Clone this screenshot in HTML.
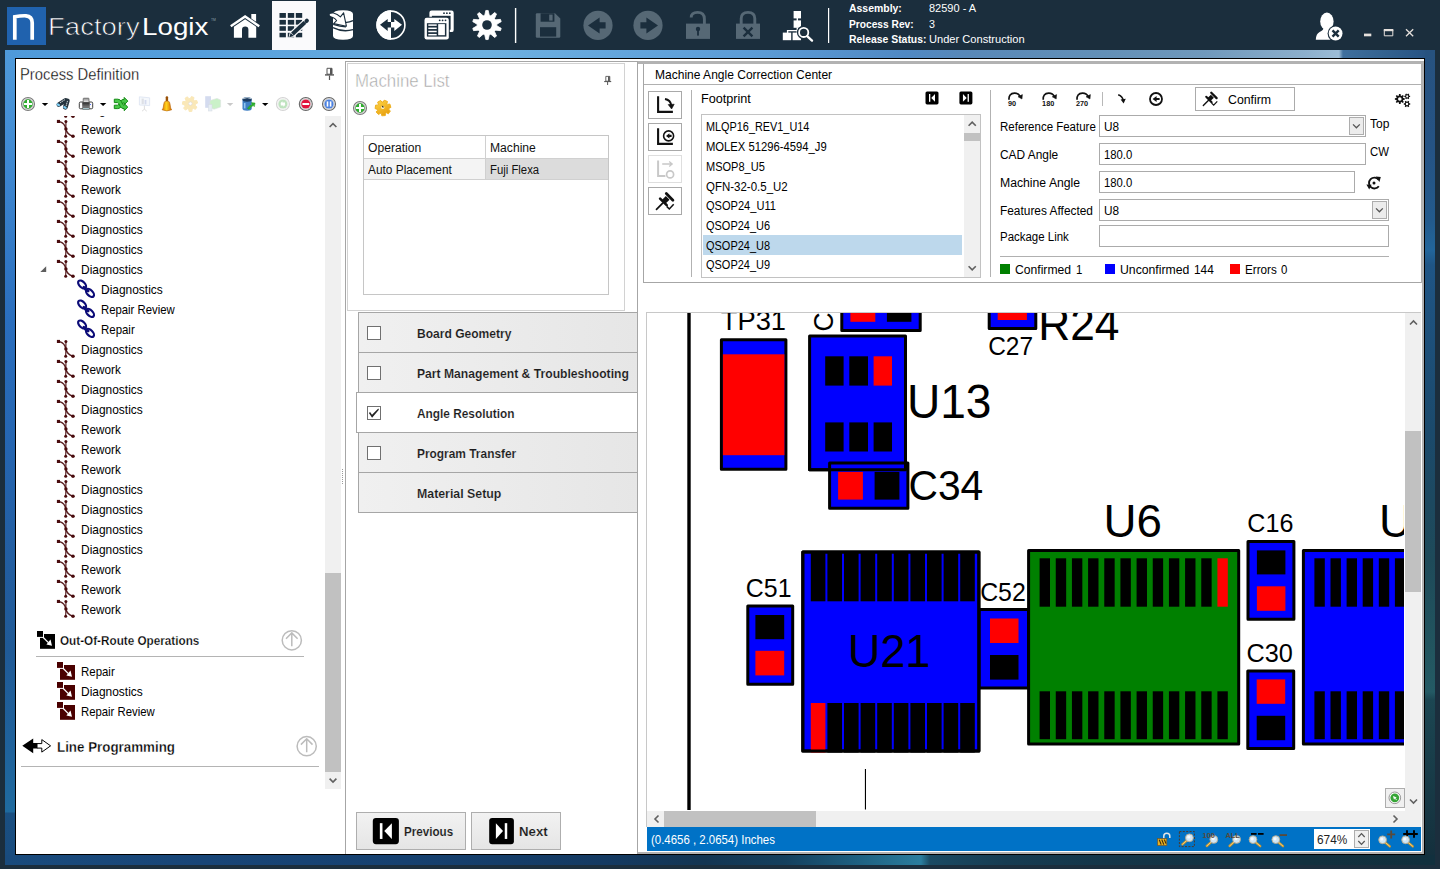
<!DOCTYPE html>
<html lang="en"><head><meta charset="utf-8"><title>FactoryLogix</title><style>
html,body{margin:0;padding:0;}
body{width:1440px;height:869px;overflow:hidden;background:#1b2e3d;position:relative;font-family:'Liberation Sans',sans-serif;}
div,span,svg,b{position:absolute;display:block;box-sizing:border-box;}
.t{white-space:pre;}
svg{overflow:visible;}
</style></head><body>
<div style="left:5px;top:50px;width:1430px;height:815px;background:#1d4f80;"></div>
<div style="left:5px;top:50px;width:1430px;height:9px;background:linear-gradient(90deg,#4f9ada 0px,#559fdc 200px,#62a8de 330px,#6eb1e0 480px,#63a5dc 620px,#5b9bd5 760px,#5089c4 900px,#5888b8 960px,#6390b7 1100px,#7099bc 1200px,#8cafcc 1300px,#9cbcd6 1333px,#9cbcd6 1334px,#3f6f9d 1338px,#33628f 1380px,#2a5787 1410px,#26507d 1430px);"></div>
<div style="left:5px;top:50px;width:11px;height:815px;background:linear-gradient(180deg,#4f9ada 0px,#4a95d8 40px,#3a82cc 150px,#2a6ebd 270px,#2565b0 400px,#225d9f 520px,#205a96 600px,#1f629b 700px,#1f6a9e 761px,#1f6a9e 762px,#1a4f81 763px,#194b7d 815px);"></div>
<div style="left:1425px;top:50px;width:10px;height:815px;background:linear-gradient(180deg,#27527f 0px,#255384 100px,#235a8c 170px,#22659a 200px,#1f5585 215px,#1d4f78 300px,#1b4a6c 380px,#1d4960 450px,#1e4a59 510px,#22555f 600px,#245a64 642px,#1c4652 650px,#193f4b 700px,#15323f 790px,#132e3c 815px);"></div>
<div style="left:5px;top:855px;width:1430px;height:10px;background:linear-gradient(90deg,#194b7d 0px,#184577 200px,#164170 400px,#143a62 600px,#133552 700px,#14405e 780px,#1d5f80 850px,#2a7d9e 915px,#2a7d9e 916px,#1a4a63 925px,#163c52 1000px,#143649 1100px,#12313f 1300px,#11303e 1430px);"></div>
<div style="left:15px;top:58px;width:1410px;height:797px;background:#fff;border:1px solid #000;box-sizing:border-box;"></div>
<div style="left:272px;top:1px;width:44px;height:49px;background:#fafafc;"></div>
<div style="left:7px;top:7px;width:39px;height:38px;background:#2062ae;"></div>
<svg style="left:0;top:0" width="1440" height="50" viewBox="0 0 1440 50"><path d="M14.8 39.7 V16.7 Q21 15.6 26 15.8 Q32.2 16.2 32.2 22.8 V39.7" fill="none" stroke="#ffffff" stroke-width="3.7" stroke-linejoin="miter"/><path d="M230.1 25.2 L245.1 15 L259.9 25.2 L258.6 27.3 L245.1 18 L231.4 27.3 Z" fill="#ffffff"/><path d="M251.3 13.9 H256.1 V21.7 L251.3 18.4 Z" fill="#ffffff"/><path d="M233.9 26.7 L245.1 19.3 L256.2 26.7 V37.8 H248.4 V29.8 Q248.4 26.5 245.2 26.5 Q242 26.5 242 29.8 V37.8 H233.9 Z" fill="#ffffff"/><rect x="279.5" y="13.0" width="6.4" height="4.85" fill="#1b2e3d"/><rect x="279.5" y="19.9" width="6.4" height="4.75" fill="#1b2e3d"/><rect x="279.5" y="26.2" width="6.4" height="4.6" fill="#1b2e3d"/><rect x="279.5" y="32.8" width="6.4" height="4.5" fill="#1b2e3d"/><rect x="287.8" y="13.0" width="6.4" height="4.85" fill="#1b2e3d"/><rect x="287.8" y="19.9" width="6.4" height="4.75" fill="#1b2e3d"/><rect x="287.8" y="26.2" width="6.4" height="4.6" fill="#1b2e3d"/><rect x="287.8" y="32.8" width="6.4" height="4.5" fill="#1b2e3d"/><rect x="295.8" y="13.0" width="6.4" height="4.85" fill="#1b2e3d"/><rect x="295.8" y="19.9" width="6.4" height="4.75" fill="#1b2e3d"/><rect x="295.8" y="26.2" width="6.4" height="4.6" fill="#1b2e3d"/><rect x="295.8" y="32.8" width="6.4" height="4.5" fill="#1b2e3d"/><path d="M292.4 34.1 L305.4 22" stroke="#fafafc" stroke-width="6.4" stroke-linecap="butt"/><path d="M306 21.4 L306.9 20.6" stroke="#fafafc" stroke-width="6.2" stroke-linecap="round"/><path d="M288.4 38 L290 31.4 L295.4 36.6 Z" fill="#fafafc"/><path d="M292.5 34 L304.9 22.4" stroke="#1b2e3d" stroke-width="4" stroke-linecap="butt"/><path d="M306.4 21.1 L306.9 20.6" stroke="#1b2e3d" stroke-width="4" stroke-linecap="round"/><path d="M289.3 37.2 L290.6 33 L293.8 36 Z" fill="#1b2e3d"/><path d="M333 14 Q333 10.2 343 10.2 Q353 10.2 353 14 V36 Q353 39.7 343 39.7 Q333 39.7 333 36 Z" fill="#ffffff"/><path d="M333 27.6 Q343 32.6 353 29.6" fill="none" stroke="#1b2e3d" stroke-width="1.3"/><path d="M345 22.6 Q350 22.2 353 20.6" fill="none" stroke="#1b2e3d" stroke-width="1.3"/><path d="M333.2 24.3 Q340 26.5 346 26.8" fill="none" stroke="#1b2e3d" stroke-width="1.3"/><path d="M329.2 13.6 Q331 12.6 333.5 13 Q337.5 14 340.4 16.8 L343.6 12.8 L346.4 26.2 L333.6 23.6 L336.6 20.6 Q335 18.4 332.8 17.6 Q330 16.8 329.2 15.6 Z" fill="#ffffff" stroke="#1b2e3d" stroke-width="1.1" stroke-linejoin="round"/><circle cx="391" cy="25" r="13.9" fill="#1b2e3d" stroke="#ffffff" stroke-width="1.6"/><path d="M391 10.3 A14.7 14.7 0 0 0 391 39.7 Z" fill="#ffffff"/><path d="M380 24.8 L387.7 18.9 V22 H391 V27.6 H387.7 V31 Z" fill="#1b2e3d"/><path d="M402 24.8 L394.3 18.9 V22 H391 V27.6 H394.3 V31 Z" fill="#ffffff"/><rect x="429.4" y="10.6" width="24.3" height="21.5" rx="2.2" fill="#ffffff"/><rect x="431.9" y="15.8" width="18.7" height="13.9" fill="#1b2e3d"/><circle cx="444" cy="13.2" r="0.9" fill="#1b2e3d"/><circle cx="446.9" cy="13.2" r="0.9" fill="#1b2e3d"/><circle cx="449.8" cy="13.2" r="0.9" fill="#1b2e3d"/><rect x="423.5" y="16.8" width="26.3" height="23.6" rx="3" fill="#1b2e3d"/><rect x="424.5" y="17.8" width="24.3" height="21.6" rx="2.2" fill="#ffffff"/><rect x="426.9" y="23.2" width="19.5" height="13.4" fill="#1b2e3d"/><circle cx="439.7" cy="20.3" r="0.9" fill="#1b2e3d"/><circle cx="442.6" cy="20.3" r="0.9" fill="#1b2e3d"/><circle cx="445.5" cy="20.3" r="0.9" fill="#1b2e3d"/><rect x="438.2" y="24.1" width="6.7" height="11.1" fill="#ffffff"/><rect x="428.3" y="24.35" width="8.4" height="1.5" fill="#ffffff"/><rect x="428.3" y="27.55" width="8.4" height="1.5" fill="#ffffff"/><rect x="428.3" y="30.75" width="8.4" height="1.5" fill="#ffffff"/><rect x="428.3" y="33.95" width="8.4" height="1.5" fill="#ffffff"/><path d="M485.81 10.45 L488.19 10.45 L489.28 15.37 L490.82 15.87 L494.59 12.53 L496.52 13.93 L494.51 18.55 L495.46 19.85 L500.47 19.37 L501.21 21.64 L496.87 24.19 L496.87 25.81 L501.21 28.36 L500.47 30.63 L495.46 30.15 L494.51 31.45 L496.52 36.07 L494.59 37.47 L490.82 34.13 L489.28 34.63 L488.19 39.55 L485.81 39.55 L484.72 34.63 L483.18 34.13 L479.41 37.47 L477.48 36.07 L479.49 31.45 L478.54 30.15 L473.53 30.63 L472.79 28.36 L477.13 25.81 L477.13 24.19 L472.79 21.64 L473.53 19.37 L478.54 19.85 L479.49 18.55 L477.48 13.93 L479.41 12.53 L483.18 15.87 L484.72 15.37 Z" fill="#ffffff" stroke="#ffffff" stroke-width="0.8" stroke-linejoin="round"/><circle cx="487" cy="25" r="4.8" fill="#1b2e3d"/><rect x="514.9" y="8" width="1.4" height="35" fill="#ffffff"/><rect x="828" y="8" width="1.2" height="35" fill="#ffffff"/><path d="M537 13.3 H555 L560.3 18.6 V36.6 Q560.3 37.8 559.1 37.8 H537 Q535.8 37.8 535.8 36.6 V14.5 Q535.8 13.3 537 13.3 Z" fill="#566875"/><rect x="540.6" y="13.3" width="13.8" height="8.4" fill="#1b2e3d"/><rect x="549.2" y="14.6" width="3.4" height="6" fill="#566875"/><rect x="540" y="27.2" width="16.2" height="9.4" fill="#1b2e3d"/><circle cx="598" cy="25.4" r="14.6" fill="#566875"/><path d="M588 25.4 L599.6 17.4 V22.3 H605.6 V28.5 H599.6 V33.4 Z" fill="#1b2e3d"/><circle cx="648" cy="25.4" r="14.6" fill="#566875"/><path d="M658 25.4 L646.4 17.4 V22.3 H640.4 V28.5 H646.4 V33.4 Z" fill="#1b2e3d"/><path d="M691.2 17.6 Q691.2 12.4 697.5 12.4 Q704.4 12.4 704.4 19 V24" fill="none" stroke="#566875" stroke-width="2.9"/><rect x="686" y="23.6" width="24" height="15.3" fill="#566875"/><circle cx="698" cy="29" r="2.2" fill="#1b2e3d"/><rect x="697.1" y="29" width="1.8" height="6.6" fill="#1b2e3d"/><path d="M741.2 24 V18.6 Q741.2 12.4 748 12.4 Q754.8 12.4 754.8 18.6 V24" fill="none" stroke="#566875" stroke-width="2.9"/><rect x="736" y="23.6" width="24" height="15.3" fill="#566875"/><path d="M743.6 27.6 L752.4 36.4 M752.4 27.6 L743.6 36.4" stroke="#1b2e3d" stroke-width="2.4"/><rect x="793.6" y="11" width="7.4" height="7.4" fill="#ffffff"/><rect x="793.6" y="20.4" width="7.4" height="7.4" fill="#ffffff"/><rect x="796.6" y="18" width="1.4" height="3" fill="#ffffff"/><path d="M797.3 27.6 V30.6 H787.6 V33 M797.3 30.6 V33" fill="none" stroke="#ffffff" stroke-width="1.4"/><rect x="782.8" y="32.6" width="8.4" height="7.6" fill="#ffffff"/><rect x="792.6" y="32.6" width="8.4" height="7.6" fill="#ffffff"/><circle cx="803.7" cy="32.4" r="5.1" fill="#1b2e3d" stroke="#1b2e3d" stroke-width="3.4"/><circle cx="803.7" cy="32.4" r="4.6" fill="#1b2e3d" stroke="#ffffff" stroke-width="1.8"/><path d="M807.4 36.4 L812 40.6" stroke="#ffffff" stroke-width="2.4" stroke-linecap="round"/><ellipse cx="1326.9" cy="21.4" rx="6.7" ry="8.8" fill="#ffffff"/><path d="M1315.8 39.8 Q1316 33.8 1319.6 32 Q1323.6 30.4 1324 27 H1329.8 Q1330 30.4 1334 32 Q1337.8 33.8 1338 39.8 Z" fill="#ffffff"/><circle cx="1335.6" cy="33.5" r="8" fill="#1b2e3d"/><circle cx="1335.6" cy="33.5" r="6.9" fill="#ffffff"/><path d="M1332.5 30.4 L1338.7 36.6 M1338.7 30.4 L1332.5 36.6" stroke="#1b2e3d" stroke-width="2.4"/><rect x="1364" y="33.6" width="7.3" height="2.7" fill="#e6e0dc"/><path d="M1384.3 29.9 H1392.8 V35.8 H1384.3 Z" fill="none" stroke="#e6e0dc" stroke-width="1"/><rect x="1383.8" y="29" width="9.5" height="2.2" fill="#e6e0dc"/><path d="M1406 29.2 L1413.2 36.2 M1413.2 29.2 L1406 36.2" stroke="#e6e0dc" stroke-width="1.3"/></svg>
<span class="t" style="left:48.20px;top:16.58px;font-size:24.6px;line-height:20px;color:#fff;transform:scaleX(1.1196);transform-origin:0 0;-webkit-text-stroke:0.7px #1b2e3d;">Factory</span>
<span class="t" style="left:141.58px;top:16.58px;font-size:24.6px;line-height:20px;color:#fff;transform:scaleX(1.1297);transform-origin:0 0;">Logix</span>
<span class="t" style="left:211.00px;top:10.25px;font-size:3.6px;line-height:20px;color:#8fa0ad;transform:scaleX(0.9300);transform-origin:0 0;">TM</span>
<span class="t" style="left:849.10px;top:-2.08px;font-size:11.5px;line-height:20px;color:#fff;font-weight:700;transform:scaleX(0.9084);transform-origin:0 0;">Assembly:</span>
<span class="t" style="left:848.59px;top:13.82px;font-size:11.5px;line-height:20px;color:#fff;font-weight:700;transform:scaleX(0.8869);transform-origin:0 0;">Process Rev:</span>
<span class="t" style="left:848.57px;top:29.02px;font-size:11.5px;line-height:20px;color:#fff;font-weight:700;transform:scaleX(0.9044);transform-origin:0 0;">Release Status:</span>
<span class="t" style="left:928.96px;top:-2.08px;font-size:11.5px;line-height:20px;color:#fff;transform:scaleX(0.9575);transform-origin:0 0;">82590 - A</span>
<span class="t" style="left:928.97px;top:13.82px;font-size:11.5px;line-height:20px;color:#fff;transform:scaleX(0.9300);transform-origin:0 0;">3</span>
<span class="t" style="left:928.55px;top:29.02px;font-size:11.5px;line-height:20px;color:#fff;transform:scaleX(0.9650);transform-origin:0 0;">Under Construction</span>
<span class="t" style="left:19.62px;top:64.59px;font-size:15.6px;line-height:20px;color:#000;transform:scaleX(0.9487);transform-origin:0 0;-webkit-text-stroke:0.3px #fff;">Process Definition</span>
<svg style="left:0;top:0" width="345" height="116" viewBox="0 0 345 116"><g transform="translate(325 68)"><path d="M2 0.3 H7 V6.2 H2 Z" fill="#fff" stroke="#555" stroke-width="1"/><rect x="5" y="0.3" width="2" height="6" fill="#555"/><rect x="0" y="6.2" width="9" height="1.4" fill="#555"/><rect x="3.9" y="7.6" width="1.2" height="4.4" fill="#555"/></g><circle cx="28" cy="104" r="6.5" fill="#fff" stroke="#7a7a7a" stroke-width="1.1"/><circle cx="28" cy="104" r="5.3" fill="none" stroke="#a8a8a8" stroke-width="0.7"/><circle cx="28" cy="104" r="4.4" fill="#2fb02f" stroke="#1f8f1f" stroke-width="0.6"/><path d="M23.9 104 H32.1 M28 99.9 V108.1" stroke="#fff" stroke-width="2"/><path d="M41.8 102.9 h6.4 l-3.2 3.2 Z" fill="#000"/><g stroke-linecap="round"><path d="M65.4 100.5 L58.8 104.6" stroke="#26343e" stroke-width="4.6"/><path d="M67.2 100.9 L65.4 107.2" stroke="#26343e" stroke-width="4.9"/><path d="M64.6 99.9 L60.4 102.5" stroke="#dfe6ea" stroke-width="0.9" stroke-dasharray="0.8 1.3"/><path d="M67.4 101.3 L66.2 105.7" stroke="#dfe6ea" stroke-width="0.9" stroke-dasharray="0.8 1.3"/><ellipse cx="58.3" cy="104.8" rx="1.9" ry="1.2" transform="rotate(35 58.3 104.8)" fill="#7fd0f8"/><ellipse cx="65" cy="107.5" rx="1.9" ry="1.2" transform="rotate(25 65 107.5)" fill="#7fd0f8"/></g><defs><linearGradient id="prg" x1="0" y1="0" x2="0" y2="1"><stop offset="0" stop-color="#2c2c2c"/><stop offset="1" stop-color="#8a8a8a"/></linearGradient><linearGradient id="prt" x1="0" y1="0" x2="0" y2="1"><stop offset="0" stop-color="#8e8e8e"/><stop offset="1" stop-color="#f4f4f4"/></linearGradient></defs><rect x="79.3" y="102" width="13.4" height="6.8" rx="1.3" fill="#fbfbfb" stroke="#2a2a2a" stroke-width="0.9"/><rect x="83.2" y="98.2" width="5.8" height="4.4" rx="0.6" fill="url(#prt)" stroke="#555" stroke-width="0.7"/><rect x="82.2" y="102.4" width="7.6" height="5.6" fill="url(#prg)"/><rect x="82.8" y="108" width="6.4" height="1.5" fill="#c4eef4" stroke="#444" stroke-width="0.5"/><rect x="90.1" y="104" width="0.9" height="0.9" fill="#3355ff"/><path d="M99.9 102.9 h6.4 l-3.2 3.2 Z" fill="#000"/><g transform="translate(113.8 97.4)" fill="#48c848" stroke="#128a12" stroke-width="1" stroke-linejoin="round"><path d="M0.5 11.2 H4 Q6.4 11.2 7.6 8.8 L9 6.2 Q9.6 5.4 10.4 5.4 V7.4 L14 3.7 L10.4 0 V1.9 Q7.6 1.9 6.4 4.2 L5 6.8 Q4.4 7.8 3.6 7.8 H0.5 Z"/><path d="M0.5 1.8 H4 Q6.4 1.8 7.6 4.2 L9 7 Q9.6 7.8 10.4 7.8 V6.1 L14 9.7 L10.4 13.3 V11.3 Q7.6 11.3 6.4 9 L5 6.2 Q4.4 5.2 3.6 5.2 H0.5 Z"/></g><g transform="translate(139 96)" opacity="0.55"><path d="M0.4 0.8 L10.6 1.8 V9.6 L0.4 9 Z" fill="#eef3fb" stroke="#b9c8e4" stroke-width="0.7"/><rect x="2.6" y="2.6" width="2.2" height="5.6" fill="#c4c8d2"/><rect x="5.6" y="4" width="1.8" height="4.4" fill="#b4bfe0"/><path d="M5.4 9.6 V13.4 M5.4 13.2 L3 15.2 M5.4 13.2 L7.8 15.2" stroke="#bbb" stroke-width="0.9" fill="none"/></g><defs><linearGradient id="bellg" x1="0" x2="1"><stop offset="0" stop-color="#e07a00"/><stop offset="0.45" stop-color="#ffd21e"/><stop offset="1" stop-color="#d86c00"/></linearGradient></defs><g transform="translate(161.8 96)"><rect x="3.9" y="0.2" width="2.4" height="5.2" rx="1.1" fill="#9a5208"/><path d="M3.4 5.2 Q2.4 5.6 2 8 L1.5 11.2 Q1.1 13 0.3 13.8 Q5.1 16 9.9 13.8 Q9.1 13 8.7 11.2 L8.2 8 Q7.8 5.6 6.8 5.2 Z" fill="url(#bellg)" stroke="#b45e00" stroke-width="0.6"/></g><path d="M196.74 100.49 L197.54 103.09 L195.40 104.12 L195.20 105.46 L196.95 107.09 L195.42 109.33 L193.27 108.30 L192.10 108.98 L191.92 111.35 L189.21 111.56 L188.68 109.24 L187.42 108.74 L185.45 110.08 L183.60 108.10 L185.08 106.23 L184.68 104.94 L182.40 104.23 L182.81 101.55 L185.19 101.55 L185.95 100.43 L185.08 98.21 L187.43 96.85 L188.92 98.71 L190.27 98.61 L191.46 96.54 L193.99 97.53 L193.46 99.86 L194.39 100.85 Z" fill="#fae8b8" stroke="#fae8b8" stroke-width="1" stroke-linejoin="round"/><circle cx="190.4" cy="103.6" r="1.7" fill="#fff" stroke="#d6d6de" stroke-width="0.6"/><g transform="translate(205 96)" opacity="0.6"><rect x="0.2" y="0.2" width="5.8" height="11.6" fill="#b9c4e6"/><path d="M5 4.6 L12 2.4 L15.6 4 V11 L9 13.2 L5 11.6 Z" fill="#a8e8a4" stroke="#c8d0d0" stroke-width="0.6"/><rect x="3.4" y="8.6" width="3.6" height="6.4" fill="#d6e2ee" stroke="#b8c4d0" stroke-width="0.5"/></g><path d="M226.9 102.9 h6.4 l-3.2 3.2 Z" fill="#c9c9c9"/><g transform="translate(241.7 97)"><path d="M0.8 2.4 Q0.8 0.2 5.4 0.2 Q10 0.2 10 2.4 V11.6 Q10 13.8 5.4 13.8 Q0.8 13.8 0.8 11.6 Z" fill="#3f7fc4"/><ellipse cx="5.4" cy="2.6" rx="4.6" ry="2.2" fill="#1c3c62"/><path d="M1 1.8 Q5.4 -0.6 9.8 1.8" stroke="#b8c4cc" stroke-width="1" fill="none"/><path d="M3 6 V11.4" stroke="#8fc4ee" stroke-width="1.6"/><path d="M5.6 11.4 Q8 8 10.4 7.4 L9.6 5.6 L13.4 6 L12.6 9.8 L11.6 8.6 Q9.4 9.6 7.4 12.4 Z" fill="#2fb52f" stroke="#1e8e1e" stroke-width="0.4"/></g><path d="M262 102.9 h6.4 l-3.2 3.2 Z" fill="#000"/><circle cx="282.9" cy="104" r="6.5" fill="#fff" stroke="#d4d4d4" stroke-width="1.1"/><circle cx="282.9" cy="104" r="5.3" fill="none" stroke="#e6e6e6" stroke-width="0.7"/><circle cx="282.9" cy="104" r="4.6" fill="#bfe3bf"/><path d="M280.4 103.2 L282.4 101.2 V102.4 H285 V103.9 H282.4 V105.2 Z M285.4 104.8 L283.4 106.8 V105.6 H280.8 V104.1 H283.4 V102.8 Z" fill="#fff"/><circle cx="305.8" cy="104" r="6.5" fill="#fff" stroke="#666" stroke-width="1.1"/><circle cx="305.8" cy="104" r="5.3" fill="none" stroke="#aaa" stroke-width="0.7"/><circle cx="305.8" cy="104" r="4.6" fill="#e0143c"/><rect x="302.4" y="103" width="6.8" height="2" fill="#fff"/><circle cx="329" cy="104" r="6.5" fill="#fff" stroke="#666" stroke-width="1.1"/><circle cx="329" cy="104" r="5.3" fill="none" stroke="#aaa" stroke-width="0.7"/><circle cx="329" cy="104" r="4.6" fill="#4a80e0"/><rect x="326.7" y="101.4" width="1.6" height="5.2" fill="#fff"/><rect x="329.8" y="101.4" width="1.6" height="5.2" fill="#fff"/></svg>
<div style="left:16px;top:116px;width:309px;height:680px;overflow:hidden">
<div style="left:-16px;top:-116px;width:345px;height:869px">
<span class="t" style="left:80.62px;top:99.70px;font-size:12.7px;line-height:20px;color:#000;transform:scaleX(0.9418);transform-origin:0 0;">Diagnostics</span>
<span class="t" style="left:80.64px;top:119.70px;font-size:12.7px;line-height:20px;color:#000;transform:scaleX(0.9265);transform-origin:0 0;">Rework</span>
<span class="t" style="left:80.64px;top:139.70px;font-size:12.7px;line-height:20px;color:#000;transform:scaleX(0.9265);transform-origin:0 0;">Rework</span>
<span class="t" style="left:80.62px;top:159.70px;font-size:12.7px;line-height:20px;color:#000;transform:scaleX(0.9418);transform-origin:0 0;">Diagnostics</span>
<span class="t" style="left:80.64px;top:179.70px;font-size:12.7px;line-height:20px;color:#000;transform:scaleX(0.9265);transform-origin:0 0;">Rework</span>
<span class="t" style="left:80.62px;top:199.70px;font-size:12.7px;line-height:20px;color:#000;transform:scaleX(0.9418);transform-origin:0 0;">Diagnostics</span>
<span class="t" style="left:80.62px;top:219.70px;font-size:12.7px;line-height:20px;color:#000;transform:scaleX(0.9418);transform-origin:0 0;">Diagnostics</span>
<span class="t" style="left:80.62px;top:239.70px;font-size:12.7px;line-height:20px;color:#000;transform:scaleX(0.9418);transform-origin:0 0;">Diagnostics</span>
<span class="t" style="left:80.62px;top:259.70px;font-size:12.7px;line-height:20px;color:#000;transform:scaleX(0.9418);transform-origin:0 0;">Diagnostics</span>
<span class="t" style="left:100.82px;top:279.70px;font-size:12.7px;line-height:20px;color:#000;transform:scaleX(0.9418);transform-origin:0 0;">Diagnostics</span>
<span class="t" style="left:100.87px;top:299.70px;font-size:12.7px;line-height:20px;color:#000;transform:scaleX(0.8933);transform-origin:0 0;">Repair Review</span>
<span class="t" style="left:100.86px;top:319.70px;font-size:12.7px;line-height:20px;color:#000;transform:scaleX(0.9020);transform-origin:0 0;">Repair</span>
<span class="t" style="left:80.62px;top:339.70px;font-size:12.7px;line-height:20px;color:#000;transform:scaleX(0.9418);transform-origin:0 0;">Diagnostics</span>
<span class="t" style="left:80.64px;top:359.70px;font-size:12.7px;line-height:20px;color:#000;transform:scaleX(0.9265);transform-origin:0 0;">Rework</span>
<span class="t" style="left:80.62px;top:379.70px;font-size:12.7px;line-height:20px;color:#000;transform:scaleX(0.9418);transform-origin:0 0;">Diagnostics</span>
<span class="t" style="left:80.62px;top:399.70px;font-size:12.7px;line-height:20px;color:#000;transform:scaleX(0.9418);transform-origin:0 0;">Diagnostics</span>
<span class="t" style="left:80.64px;top:419.70px;font-size:12.7px;line-height:20px;color:#000;transform:scaleX(0.9265);transform-origin:0 0;">Rework</span>
<span class="t" style="left:80.64px;top:439.70px;font-size:12.7px;line-height:20px;color:#000;transform:scaleX(0.9265);transform-origin:0 0;">Rework</span>
<span class="t" style="left:80.64px;top:459.70px;font-size:12.7px;line-height:20px;color:#000;transform:scaleX(0.9265);transform-origin:0 0;">Rework</span>
<span class="t" style="left:80.62px;top:479.70px;font-size:12.7px;line-height:20px;color:#000;transform:scaleX(0.9418);transform-origin:0 0;">Diagnostics</span>
<span class="t" style="left:80.62px;top:499.70px;font-size:12.7px;line-height:20px;color:#000;transform:scaleX(0.9418);transform-origin:0 0;">Diagnostics</span>
<span class="t" style="left:80.62px;top:519.70px;font-size:12.7px;line-height:20px;color:#000;transform:scaleX(0.9418);transform-origin:0 0;">Diagnostics</span>
<span class="t" style="left:80.62px;top:539.70px;font-size:12.7px;line-height:20px;color:#000;transform:scaleX(0.9418);transform-origin:0 0;">Diagnostics</span>
<span class="t" style="left:80.64px;top:559.70px;font-size:12.7px;line-height:20px;color:#000;transform:scaleX(0.9265);transform-origin:0 0;">Rework</span>
<span class="t" style="left:80.64px;top:579.70px;font-size:12.7px;line-height:20px;color:#000;transform:scaleX(0.9265);transform-origin:0 0;">Rework</span>
<span class="t" style="left:80.64px;top:599.70px;font-size:12.7px;line-height:20px;color:#000;transform:scaleX(0.9265);transform-origin:0 0;">Rework</span>
<svg style="left:0;top:0" width="345" height="869" viewBox="0 0 345 869"><g transform="translate(57 100)" fill="#4a0c0e" stroke="#4a0c0e"><rect x="-0.1" y="-0.1" width="3.1" height="3.1" stroke="none"/><path d="M2.6 1.6 Q7.8 3 8.8 8.9 Q10 14.6 16 16.2" fill="none" stroke-width="1.5" opacity="0.92"/><path d="M8.9 1.5 V8.9 L8.7 16.2" fill="none" stroke-width="1.2" opacity="0.9"/><circle cx="8.9" cy="1.5" r="1.5" stroke="none"/><circle cx="8.9" cy="8.9" r="1.7" stroke="none"/><circle cx="8.7" cy="16.2" r="1.5" stroke="none"/><circle cx="16" cy="16.2" r="1.75" stroke="none"/></g><g transform="translate(57 120)" fill="#4a0c0e" stroke="#4a0c0e"><rect x="-0.1" y="-0.1" width="3.1" height="3.1" stroke="none"/><path d="M2.6 1.6 Q7.8 3 8.8 8.9 Q10 14.6 16 16.2" fill="none" stroke-width="1.5" opacity="0.92"/><path d="M8.9 1.5 V8.9 L8.7 16.2" fill="none" stroke-width="1.2" opacity="0.9"/><circle cx="8.9" cy="1.5" r="1.5" stroke="none"/><circle cx="8.9" cy="8.9" r="1.7" stroke="none"/><circle cx="8.7" cy="16.2" r="1.5" stroke="none"/><circle cx="16" cy="16.2" r="1.75" stroke="none"/></g><g transform="translate(57 140)" fill="#4a0c0e" stroke="#4a0c0e"><rect x="-0.1" y="-0.1" width="3.1" height="3.1" stroke="none"/><path d="M2.6 1.6 Q7.8 3 8.8 8.9 Q10 14.6 16 16.2" fill="none" stroke-width="1.5" opacity="0.92"/><path d="M8.9 1.5 V8.9 L8.7 16.2" fill="none" stroke-width="1.2" opacity="0.9"/><circle cx="8.9" cy="1.5" r="1.5" stroke="none"/><circle cx="8.9" cy="8.9" r="1.7" stroke="none"/><circle cx="8.7" cy="16.2" r="1.5" stroke="none"/><circle cx="16" cy="16.2" r="1.75" stroke="none"/></g><g transform="translate(57 160)" fill="#4a0c0e" stroke="#4a0c0e"><rect x="-0.1" y="-0.1" width="3.1" height="3.1" stroke="none"/><path d="M2.6 1.6 Q7.8 3 8.8 8.9 Q10 14.6 16 16.2" fill="none" stroke-width="1.5" opacity="0.92"/><path d="M8.9 1.5 V8.9 L8.7 16.2" fill="none" stroke-width="1.2" opacity="0.9"/><circle cx="8.9" cy="1.5" r="1.5" stroke="none"/><circle cx="8.9" cy="8.9" r="1.7" stroke="none"/><circle cx="8.7" cy="16.2" r="1.5" stroke="none"/><circle cx="16" cy="16.2" r="1.75" stroke="none"/></g><g transform="translate(57 180)" fill="#4a0c0e" stroke="#4a0c0e"><rect x="-0.1" y="-0.1" width="3.1" height="3.1" stroke="none"/><path d="M2.6 1.6 Q7.8 3 8.8 8.9 Q10 14.6 16 16.2" fill="none" stroke-width="1.5" opacity="0.92"/><path d="M8.9 1.5 V8.9 L8.7 16.2" fill="none" stroke-width="1.2" opacity="0.9"/><circle cx="8.9" cy="1.5" r="1.5" stroke="none"/><circle cx="8.9" cy="8.9" r="1.7" stroke="none"/><circle cx="8.7" cy="16.2" r="1.5" stroke="none"/><circle cx="16" cy="16.2" r="1.75" stroke="none"/></g><g transform="translate(57 200)" fill="#4a0c0e" stroke="#4a0c0e"><rect x="-0.1" y="-0.1" width="3.1" height="3.1" stroke="none"/><path d="M2.6 1.6 Q7.8 3 8.8 8.9 Q10 14.6 16 16.2" fill="none" stroke-width="1.5" opacity="0.92"/><path d="M8.9 1.5 V8.9 L8.7 16.2" fill="none" stroke-width="1.2" opacity="0.9"/><circle cx="8.9" cy="1.5" r="1.5" stroke="none"/><circle cx="8.9" cy="8.9" r="1.7" stroke="none"/><circle cx="8.7" cy="16.2" r="1.5" stroke="none"/><circle cx="16" cy="16.2" r="1.75" stroke="none"/></g><g transform="translate(57 220)" fill="#4a0c0e" stroke="#4a0c0e"><rect x="-0.1" y="-0.1" width="3.1" height="3.1" stroke="none"/><path d="M2.6 1.6 Q7.8 3 8.8 8.9 Q10 14.6 16 16.2" fill="none" stroke-width="1.5" opacity="0.92"/><path d="M8.9 1.5 V8.9 L8.7 16.2" fill="none" stroke-width="1.2" opacity="0.9"/><circle cx="8.9" cy="1.5" r="1.5" stroke="none"/><circle cx="8.9" cy="8.9" r="1.7" stroke="none"/><circle cx="8.7" cy="16.2" r="1.5" stroke="none"/><circle cx="16" cy="16.2" r="1.75" stroke="none"/></g><g transform="translate(57 240)" fill="#4a0c0e" stroke="#4a0c0e"><rect x="-0.1" y="-0.1" width="3.1" height="3.1" stroke="none"/><path d="M2.6 1.6 Q7.8 3 8.8 8.9 Q10 14.6 16 16.2" fill="none" stroke-width="1.5" opacity="0.92"/><path d="M8.9 1.5 V8.9 L8.7 16.2" fill="none" stroke-width="1.2" opacity="0.9"/><circle cx="8.9" cy="1.5" r="1.5" stroke="none"/><circle cx="8.9" cy="8.9" r="1.7" stroke="none"/><circle cx="8.7" cy="16.2" r="1.5" stroke="none"/><circle cx="16" cy="16.2" r="1.75" stroke="none"/></g><g transform="translate(57 260)" fill="#4a0c0e" stroke="#4a0c0e"><rect x="-0.1" y="-0.1" width="3.1" height="3.1" stroke="none"/><path d="M2.6 1.6 Q7.8 3 8.8 8.9 Q10 14.6 16 16.2" fill="none" stroke-width="1.5" opacity="0.92"/><path d="M8.9 1.5 V8.9 L8.7 16.2" fill="none" stroke-width="1.2" opacity="0.9"/><circle cx="8.9" cy="1.5" r="1.5" stroke="none"/><circle cx="8.9" cy="8.9" r="1.7" stroke="none"/><circle cx="8.7" cy="16.2" r="1.5" stroke="none"/><circle cx="16" cy="16.2" r="1.75" stroke="none"/></g><path d="M46.2 266.2 V272 H40.3 Z" fill="#5e5e5e"/><g transform="translate(77.2 280)" fill="none" stroke="#0c0c78" stroke-width="2.2" stroke-linecap="round"><ellipse cx="4.9" cy="4.5" rx="4.9" ry="2.8" transform="rotate(45 4.9 4.5)"/><ellipse cx="12.8" cy="12.9" rx="4.9" ry="2.8" transform="rotate(45 12.8 12.9)"/><path d="M6.6 7.2 Q8 10 11 11" stroke-width="2.6"/></g><g transform="translate(77.2 300)" fill="none" stroke="#0c0c78" stroke-width="2.2" stroke-linecap="round"><ellipse cx="4.9" cy="4.5" rx="4.9" ry="2.8" transform="rotate(45 4.9 4.5)"/><ellipse cx="12.8" cy="12.9" rx="4.9" ry="2.8" transform="rotate(45 12.8 12.9)"/><path d="M6.6 7.2 Q8 10 11 11" stroke-width="2.6"/></g><g transform="translate(77.2 320)" fill="none" stroke="#0c0c78" stroke-width="2.2" stroke-linecap="round"><ellipse cx="4.9" cy="4.5" rx="4.9" ry="2.8" transform="rotate(45 4.9 4.5)"/><ellipse cx="12.8" cy="12.9" rx="4.9" ry="2.8" transform="rotate(45 12.8 12.9)"/><path d="M6.6 7.2 Q8 10 11 11" stroke-width="2.6"/></g><g transform="translate(57 340)" fill="#4a0c0e" stroke="#4a0c0e"><rect x="-0.1" y="-0.1" width="3.1" height="3.1" stroke="none"/><path d="M2.6 1.6 Q7.8 3 8.8 8.9 Q10 14.6 16 16.2" fill="none" stroke-width="1.5" opacity="0.92"/><path d="M8.9 1.5 V8.9 L8.7 16.2" fill="none" stroke-width="1.2" opacity="0.9"/><circle cx="8.9" cy="1.5" r="1.5" stroke="none"/><circle cx="8.9" cy="8.9" r="1.7" stroke="none"/><circle cx="8.7" cy="16.2" r="1.5" stroke="none"/><circle cx="16" cy="16.2" r="1.75" stroke="none"/></g><g transform="translate(57 360)" fill="#4a0c0e" stroke="#4a0c0e"><rect x="-0.1" y="-0.1" width="3.1" height="3.1" stroke="none"/><path d="M2.6 1.6 Q7.8 3 8.8 8.9 Q10 14.6 16 16.2" fill="none" stroke-width="1.5" opacity="0.92"/><path d="M8.9 1.5 V8.9 L8.7 16.2" fill="none" stroke-width="1.2" opacity="0.9"/><circle cx="8.9" cy="1.5" r="1.5" stroke="none"/><circle cx="8.9" cy="8.9" r="1.7" stroke="none"/><circle cx="8.7" cy="16.2" r="1.5" stroke="none"/><circle cx="16" cy="16.2" r="1.75" stroke="none"/></g><g transform="translate(57 380)" fill="#4a0c0e" stroke="#4a0c0e"><rect x="-0.1" y="-0.1" width="3.1" height="3.1" stroke="none"/><path d="M2.6 1.6 Q7.8 3 8.8 8.9 Q10 14.6 16 16.2" fill="none" stroke-width="1.5" opacity="0.92"/><path d="M8.9 1.5 V8.9 L8.7 16.2" fill="none" stroke-width="1.2" opacity="0.9"/><circle cx="8.9" cy="1.5" r="1.5" stroke="none"/><circle cx="8.9" cy="8.9" r="1.7" stroke="none"/><circle cx="8.7" cy="16.2" r="1.5" stroke="none"/><circle cx="16" cy="16.2" r="1.75" stroke="none"/></g><g transform="translate(57 400)" fill="#4a0c0e" stroke="#4a0c0e"><rect x="-0.1" y="-0.1" width="3.1" height="3.1" stroke="none"/><path d="M2.6 1.6 Q7.8 3 8.8 8.9 Q10 14.6 16 16.2" fill="none" stroke-width="1.5" opacity="0.92"/><path d="M8.9 1.5 V8.9 L8.7 16.2" fill="none" stroke-width="1.2" opacity="0.9"/><circle cx="8.9" cy="1.5" r="1.5" stroke="none"/><circle cx="8.9" cy="8.9" r="1.7" stroke="none"/><circle cx="8.7" cy="16.2" r="1.5" stroke="none"/><circle cx="16" cy="16.2" r="1.75" stroke="none"/></g><g transform="translate(57 420)" fill="#4a0c0e" stroke="#4a0c0e"><rect x="-0.1" y="-0.1" width="3.1" height="3.1" stroke="none"/><path d="M2.6 1.6 Q7.8 3 8.8 8.9 Q10 14.6 16 16.2" fill="none" stroke-width="1.5" opacity="0.92"/><path d="M8.9 1.5 V8.9 L8.7 16.2" fill="none" stroke-width="1.2" opacity="0.9"/><circle cx="8.9" cy="1.5" r="1.5" stroke="none"/><circle cx="8.9" cy="8.9" r="1.7" stroke="none"/><circle cx="8.7" cy="16.2" r="1.5" stroke="none"/><circle cx="16" cy="16.2" r="1.75" stroke="none"/></g><g transform="translate(57 440)" fill="#4a0c0e" stroke="#4a0c0e"><rect x="-0.1" y="-0.1" width="3.1" height="3.1" stroke="none"/><path d="M2.6 1.6 Q7.8 3 8.8 8.9 Q10 14.6 16 16.2" fill="none" stroke-width="1.5" opacity="0.92"/><path d="M8.9 1.5 V8.9 L8.7 16.2" fill="none" stroke-width="1.2" opacity="0.9"/><circle cx="8.9" cy="1.5" r="1.5" stroke="none"/><circle cx="8.9" cy="8.9" r="1.7" stroke="none"/><circle cx="8.7" cy="16.2" r="1.5" stroke="none"/><circle cx="16" cy="16.2" r="1.75" stroke="none"/></g><g transform="translate(57 460)" fill="#4a0c0e" stroke="#4a0c0e"><rect x="-0.1" y="-0.1" width="3.1" height="3.1" stroke="none"/><path d="M2.6 1.6 Q7.8 3 8.8 8.9 Q10 14.6 16 16.2" fill="none" stroke-width="1.5" opacity="0.92"/><path d="M8.9 1.5 V8.9 L8.7 16.2" fill="none" stroke-width="1.2" opacity="0.9"/><circle cx="8.9" cy="1.5" r="1.5" stroke="none"/><circle cx="8.9" cy="8.9" r="1.7" stroke="none"/><circle cx="8.7" cy="16.2" r="1.5" stroke="none"/><circle cx="16" cy="16.2" r="1.75" stroke="none"/></g><g transform="translate(57 480)" fill="#4a0c0e" stroke="#4a0c0e"><rect x="-0.1" y="-0.1" width="3.1" height="3.1" stroke="none"/><path d="M2.6 1.6 Q7.8 3 8.8 8.9 Q10 14.6 16 16.2" fill="none" stroke-width="1.5" opacity="0.92"/><path d="M8.9 1.5 V8.9 L8.7 16.2" fill="none" stroke-width="1.2" opacity="0.9"/><circle cx="8.9" cy="1.5" r="1.5" stroke="none"/><circle cx="8.9" cy="8.9" r="1.7" stroke="none"/><circle cx="8.7" cy="16.2" r="1.5" stroke="none"/><circle cx="16" cy="16.2" r="1.75" stroke="none"/></g><g transform="translate(57 500)" fill="#4a0c0e" stroke="#4a0c0e"><rect x="-0.1" y="-0.1" width="3.1" height="3.1" stroke="none"/><path d="M2.6 1.6 Q7.8 3 8.8 8.9 Q10 14.6 16 16.2" fill="none" stroke-width="1.5" opacity="0.92"/><path d="M8.9 1.5 V8.9 L8.7 16.2" fill="none" stroke-width="1.2" opacity="0.9"/><circle cx="8.9" cy="1.5" r="1.5" stroke="none"/><circle cx="8.9" cy="8.9" r="1.7" stroke="none"/><circle cx="8.7" cy="16.2" r="1.5" stroke="none"/><circle cx="16" cy="16.2" r="1.75" stroke="none"/></g><g transform="translate(57 520)" fill="#4a0c0e" stroke="#4a0c0e"><rect x="-0.1" y="-0.1" width="3.1" height="3.1" stroke="none"/><path d="M2.6 1.6 Q7.8 3 8.8 8.9 Q10 14.6 16 16.2" fill="none" stroke-width="1.5" opacity="0.92"/><path d="M8.9 1.5 V8.9 L8.7 16.2" fill="none" stroke-width="1.2" opacity="0.9"/><circle cx="8.9" cy="1.5" r="1.5" stroke="none"/><circle cx="8.9" cy="8.9" r="1.7" stroke="none"/><circle cx="8.7" cy="16.2" r="1.5" stroke="none"/><circle cx="16" cy="16.2" r="1.75" stroke="none"/></g><g transform="translate(57 540)" fill="#4a0c0e" stroke="#4a0c0e"><rect x="-0.1" y="-0.1" width="3.1" height="3.1" stroke="none"/><path d="M2.6 1.6 Q7.8 3 8.8 8.9 Q10 14.6 16 16.2" fill="none" stroke-width="1.5" opacity="0.92"/><path d="M8.9 1.5 V8.9 L8.7 16.2" fill="none" stroke-width="1.2" opacity="0.9"/><circle cx="8.9" cy="1.5" r="1.5" stroke="none"/><circle cx="8.9" cy="8.9" r="1.7" stroke="none"/><circle cx="8.7" cy="16.2" r="1.5" stroke="none"/><circle cx="16" cy="16.2" r="1.75" stroke="none"/></g><g transform="translate(57 560)" fill="#4a0c0e" stroke="#4a0c0e"><rect x="-0.1" y="-0.1" width="3.1" height="3.1" stroke="none"/><path d="M2.6 1.6 Q7.8 3 8.8 8.9 Q10 14.6 16 16.2" fill="none" stroke-width="1.5" opacity="0.92"/><path d="M8.9 1.5 V8.9 L8.7 16.2" fill="none" stroke-width="1.2" opacity="0.9"/><circle cx="8.9" cy="1.5" r="1.5" stroke="none"/><circle cx="8.9" cy="8.9" r="1.7" stroke="none"/><circle cx="8.7" cy="16.2" r="1.5" stroke="none"/><circle cx="16" cy="16.2" r="1.75" stroke="none"/></g><g transform="translate(57 580)" fill="#4a0c0e" stroke="#4a0c0e"><rect x="-0.1" y="-0.1" width="3.1" height="3.1" stroke="none"/><path d="M2.6 1.6 Q7.8 3 8.8 8.9 Q10 14.6 16 16.2" fill="none" stroke-width="1.5" opacity="0.92"/><path d="M8.9 1.5 V8.9 L8.7 16.2" fill="none" stroke-width="1.2" opacity="0.9"/><circle cx="8.9" cy="1.5" r="1.5" stroke="none"/><circle cx="8.9" cy="8.9" r="1.7" stroke="none"/><circle cx="8.7" cy="16.2" r="1.5" stroke="none"/><circle cx="16" cy="16.2" r="1.75" stroke="none"/></g><g transform="translate(57 600)" fill="#4a0c0e" stroke="#4a0c0e"><rect x="-0.1" y="-0.1" width="3.1" height="3.1" stroke="none"/><path d="M2.6 1.6 Q7.8 3 8.8 8.9 Q10 14.6 16 16.2" fill="none" stroke-width="1.5" opacity="0.92"/><path d="M8.9 1.5 V8.9 L8.7 16.2" fill="none" stroke-width="1.2" opacity="0.9"/><circle cx="8.9" cy="1.5" r="1.5" stroke="none"/><circle cx="8.9" cy="8.9" r="1.7" stroke="none"/><circle cx="8.7" cy="16.2" r="1.5" stroke="none"/><circle cx="16" cy="16.2" r="1.75" stroke="none"/></g><g transform="translate(37 631)"><rect x="3" y="3" width="15" height="14.8" fill="#000"/><rect x="0" y="0" width="7" height="6.9" fill="#fff"/><rect x="0" y="0" width="6" height="5.9" fill="#000"/><path d="M6 6.2 L11.4 11.6" stroke="#fff" stroke-width="1.3" fill="none"/><path d="M15 14.7 L9.4 13.5 L13.5 8.6 Z" fill="#fff"/></g><circle cx="291.8" cy="640.3" r="9.6" fill="none" stroke="#bcbcbc" stroke-width="1.5"/><path d="M291.8 646.3 V633.3 M286.0 638.6999999999999 L291.8 632.9 L297.6 638.6999999999999" fill="none" stroke="#bcbcbc" stroke-width="1.5"/><g transform="translate(57 662)"><rect x="3" y="3" width="15" height="14.8" fill="#4a0000"/><rect x="0" y="0" width="7" height="6.9" fill="#fff"/><rect x="0" y="0" width="6" height="5.9" fill="#4a0000"/><path d="M6 6.2 L11.4 11.6" stroke="#fff" stroke-width="1.3" fill="none"/><path d="M15 14.7 L9.4 13.5 L13.5 8.6 Z" fill="#fff"/></g><g transform="translate(57 682)"><rect x="3" y="3" width="15" height="14.8" fill="#4a0000"/><rect x="0" y="0" width="7" height="6.9" fill="#fff"/><rect x="0" y="0" width="6" height="5.9" fill="#4a0000"/><path d="M6 6.2 L11.4 11.6" stroke="#fff" stroke-width="1.3" fill="none"/><path d="M15 14.7 L9.4 13.5 L13.5 8.6 Z" fill="#fff"/></g><g transform="translate(57 702)"><rect x="3" y="3" width="15" height="14.8" fill="#4a0000"/><rect x="0" y="0" width="7" height="6.9" fill="#fff"/><rect x="0" y="0" width="6" height="5.9" fill="#4a0000"/><path d="M6 6.2 L11.4 11.6" stroke="#fff" stroke-width="1.3" fill="none"/><path d="M15 14.7 L9.4 13.5 L13.5 8.6 Z" fill="#fff"/></g><path d="M22.3 745.85 L33.2 738.5 V743.1 H37.2 V748.6 H33.2 V753.2 Z" fill="#000"/><path d="M37 743.6 H41.8 V739.6 L50.6 745.85 L41.8 752.1 V748.1 H37 Z" fill="#fff" stroke="#000" stroke-width="1"/><circle cx="306.7" cy="746.2" r="9.6" fill="none" stroke="#bcbcbc" stroke-width="1.5"/><path d="M306.7 752.2 V739.2 M300.9 744.6 L306.7 738.8000000000001 L312.5 744.6" fill="none" stroke="#bcbcbc" stroke-width="1.5"/></svg>
<span class="t" style="left:59.81px;top:631.43px;font-size:12.6px;line-height:20px;color:#000;font-weight:700;transform:scaleX(0.9309);transform-origin:0 0;-webkit-text-stroke:0.25px #fff;">Out-Of-Route Operations</span>
<span class="t" style="left:80.66px;top:661.50px;font-size:12.7px;line-height:20px;color:#000;transform:scaleX(0.9020);transform-origin:0 0;">Repair</span>
<span class="t" style="left:80.62px;top:681.50px;font-size:12.7px;line-height:20px;color:#000;transform:scaleX(0.9418);transform-origin:0 0;">Diagnostics</span>
<span class="t" style="left:80.67px;top:701.50px;font-size:12.7px;line-height:20px;color:#000;transform:scaleX(0.8933);transform-origin:0 0;">Repair Review</span>
<span class="t" style="left:56.51px;top:736.75px;font-size:14.0px;line-height:20px;color:#000;font-weight:700;transform:scaleX(0.9537);transform-origin:0 0;-webkit-text-stroke:0.3px #fff;">Line Programming</span>
<div style="left:36px;top:656px;width:268px;height:1px;background:#b4b4b4;"></div>
<div style="left:21px;top:766px;width:298px;height:1px;background:#b4b4b4;"></div>
</div></div>
<div style="left:325px;top:116px;width:16px;height:673px;background:#f0f0f0;"></div>
<div style="left:325px;top:573px;width:16px;height:199px;background:#c1c1c1;"></div>
<svg style="left:325px;top:116px;" width="16" height="17" viewBox="0 0 16 17"><path d="M4.6 11 L8 7.6 L11.4 11" fill="none" stroke="#606060" stroke-width="1.6"/></svg>
<svg style="left:325px;top:772px;" width="16" height="17" viewBox="0 0 16 17"><path d="M4.6 6.6 L8 10 L11.4 6.6" fill="none" stroke="#606060" stroke-width="1.6"/></svg>
<svg style="left:341px;top:468px;" width="4" height="18" viewBox="0 0 4 18"><g fill="#9a9a9a"><rect x="1" y="1" width="1" height="1"/><rect x="1" y="3" width="1" height="1"/><rect x="1" y="5" width="1" height="1"/><rect x="1" y="7" width="1" height="1"/><rect x="1" y="9" width="1" height="1"/><rect x="1" y="11" width="1" height="1"/><rect x="1" y="13" width="1" height="1"/><rect x="1" y="15" width="1" height="1"/></g></svg>
<div style="left:345px;top:61px;width:1079px;height:1px;background:#a6a6a6;"></div>
<div style="left:345px;top:61px;width:1px;height:793px;background:#a6a6a6;"></div>
<div style="left:637px;top:61px;width:1px;height:793px;background:#a6a6a6;"></div>
<div style="left:347px;top:63px;width:278px;height:248px;border:1px solid #d2d2d2;"></div>
<span class="t" style="left:355.42px;top:71.06px;font-size:18.6px;line-height:20px;color:#a4a4a4;transform:scaleX(0.9055);transform-origin:0 0;-webkit-text-stroke:0.5px #fff;">Machine List</span>
<svg style="left:0;top:0" width="640" height="130" viewBox="0 0 640 130"><g transform="translate(604.2 76)"><path d="M1.6 0.4 H5.6 V5.2 H1.6 Z" fill="#fff" stroke="#5a5a5a" stroke-width="0.9"/><rect x="3.8" y="0.4" width="1.8" height="4.8" fill="#5a5a5a"/><rect x="0" y="5" width="7" height="1.1" fill="#5a5a5a"/><rect x="2.9" y="6" width="1" height="3" fill="#5a5a5a"/></g><circle cx="360" cy="108" r="6.5" fill="#fff" stroke="#7a7a7a" stroke-width="1.1"/><circle cx="360" cy="108" r="5.3" fill="none" stroke="#a8a8a8" stroke-width="0.7"/><circle cx="360" cy="108" r="4.4" fill="#2fb02f" stroke="#1f8f1f" stroke-width="0.6"/><path d="M355.9 108 H364.1 M360 103.9 V112.1" stroke="#fff" stroke-width="2"/><defs><linearGradient id="gg" x1="0" y1="0" x2="0.6" y2="1"><stop offset="0" stop-color="#ffd94a"/><stop offset="1" stop-color="#e8a010"/></linearGradient></defs><path d="M389.84 104.04 L390.88 107.40 L388.99 108.25 L388.80 109.52 L390.36 110.88 L388.38 113.79 L386.55 112.84 L385.43 113.49 L385.33 115.55 L381.83 115.81 L381.43 113.79 L380.22 113.32 L378.55 114.53 L376.16 111.96 L377.49 110.38 L377.11 109.15 L375.12 108.60 L375.64 105.12 L377.71 105.18 L378.43 104.11 L377.62 102.21 L380.67 100.45 L381.91 102.10 L383.19 102.00 L384.17 100.19 L387.45 101.47 L386.93 103.47 L387.81 104.41 Z" fill="url(#gg)" stroke="#eeb020" stroke-width="1" stroke-linejoin="round"/><circle cx="382.8" cy="107.4" r="1.6" fill="#fff3c8"/><path d="M381.8 105.8 Q383.8 105.4 383.8 107.6 L382.4 107.6 Z" fill="#2a2210"/></svg>
<div style="left:363px;top:135px;width:246px;height:160px;background:#fff;border:1px solid #c6c6c6;"></div>
<div style="left:364px;top:159px;width:122px;height:21px;background:#f4f4f4;"></div>
<div style="left:486px;top:159px;width:122px;height:21px;background:#dcdcdc;"></div>
<div style="left:364px;top:158px;width:244px;height:1px;background:#d0d0d0;"></div>
<div style="left:364px;top:179px;width:244px;height:1px;background:#d0d0d0;"></div>
<div style="left:485px;top:136px;width:1px;height:44px;background:#d0d0d0;"></div>
<span class="t" style="left:367.79px;top:138.17px;font-size:12.5px;line-height:20px;color:#111;transform:scaleX(0.9691);transform-origin:0 0;">Operation</span>
<span class="t" style="left:489.61px;top:138.17px;font-size:12.5px;line-height:20px;color:#111;transform:scaleX(0.9693);transform-origin:0 0;">Machine</span>
<span class="t" style="left:368.20px;top:160.17px;font-size:12.5px;line-height:20px;color:#111;transform:scaleX(0.9495);transform-origin:0 0;">Auto Placement</span>
<span class="t" style="left:489.67px;top:160.17px;font-size:12.5px;line-height:20px;color:#111;transform:scaleX(0.9060);transform-origin:0 0;">Fuji Flexa</span>
<div style="left:358px;top:312px;width:280px;height:41px;background:linear-gradient(90deg,#f0f0f0,#e6e6e6);border:1px solid #a6a6a6;border-right:none;"></div>
<div style="left:358px;top:352px;width:280px;height:41px;background:linear-gradient(90deg,#f0f0f0,#e6e6e6);border:1px solid #a6a6a6;border-right:none;"></div>
<div style="left:358px;top:432px;width:280px;height:41px;background:linear-gradient(90deg,#f0f0f0,#e6e6e6);border:1px solid #a6a6a6;border-right:none;"></div>
<div style="left:358px;top:472px;width:280px;height:41px;background:linear-gradient(90deg,#f0f0f0,#e6e6e6);border:1px solid #a6a6a6;border-right:none;"></div>
<div style="left:356px;top:392px;width:282px;height:41px;background:#fff;border:1px solid #a6a6a6;border-right:none;"></div>
<div style="left:637px;top:393px;width:1px;height:39px;background:#fff;"></div>
<div style="left:367px;top:326px;width:14px;height:14px;background:#fff;border:1px solid #707070;"></div>
<span class="t" style="left:416.64px;top:324.27px;font-size:12.5px;line-height:20px;color:#1c1c1c;font-weight:700;transform:scaleX(0.9644);transform-origin:0 0;-webkit-text-stroke:0.12px #ebebeb;">Board Geometry</span>
<div style="left:367px;top:366px;width:14px;height:14px;background:#fff;border:1px solid #707070;"></div>
<span class="t" style="left:416.63px;top:364.27px;font-size:12.5px;line-height:20px;color:#1c1c1c;font-weight:700;transform:scaleX(0.9716);transform-origin:0 0;-webkit-text-stroke:0.12px #ebebeb;">Part Management &amp; Troubleshooting</span>
<div style="left:367px;top:406px;width:14px;height:14px;background:#fff;border:1px solid #707070;"></div>
<svg style="left:367px;top:406px;" width="14" height="14" viewBox="0 0 14 14"><path d="M1.9 7.1 L3.1 5.9 L5 8.8 L11.3 2.5 L11.9 3.7 L5.1 11.8 Z" fill="#222"/></svg>
<span class="t" style="left:416.65px;top:404.27px;font-size:12.5px;line-height:20px;color:#1c1c1c;font-weight:700;transform:scaleX(0.9480);transform-origin:0 0;-webkit-text-stroke:0.12px #fff;">Angle Resolution</span>
<div style="left:367px;top:446px;width:14px;height:14px;background:#fff;border:1px solid #707070;"></div>
<span class="t" style="left:416.65px;top:444.27px;font-size:12.5px;line-height:20px;color:#1c1c1c;font-weight:700;transform:scaleX(0.9523);transform-origin:0 0;-webkit-text-stroke:0.12px #ebebeb;">Program Transfer</span>
<span class="t" style="left:416.61px;top:484.27px;font-size:12.5px;line-height:20px;color:#1c1c1c;font-weight:700;transform:scaleX(0.9867);transform-origin:0 0;-webkit-text-stroke:0.12px #ebebeb;">Material Setup</span>
<div style="left:356px;top:812px;width:110px;height:38px;background:linear-gradient(180deg,#f2f2f2,#e5e5e5);border:1px solid #aeaeae;"></div>
<div style="left:471px;top:812px;width:90px;height:38px;background:linear-gradient(180deg,#f2f2f2,#e5e5e5);border:1px solid #aeaeae;"></div>
<svg style="left:0px;top:0px;pointer-events:none;" width="640" height="869" viewBox="0 0 640 869"><rect x="372.8" y="817.9" width="26.1" height="26.3" rx="3.13" fill="#000"/><rect x="379.85" y="823.16" width="2.61" height="15.78" fill="#fff"/><path d="M384.28 831.05 L391.85 823.16 V838.94 Z" fill="#fff"/><rect x="489.2" y="817.9" width="24.7" height="26.3" rx="2.96" fill="#000"/><rect x="504.76" y="823.16" width="2.47" height="15.78" fill="#fff"/><path d="M503.03 831.05 L495.87 823.16 V838.94 Z" fill="#fff"/></svg>
<span class="t" style="left:403.87px;top:822.27px;font-size:12.5px;line-height:20px;color:#1c1c1c;font-weight:700;transform:scaleX(0.9319);transform-origin:0 0;-webkit-text-stroke:0.12px #ececec;">Previous</span>
<span class="t" style="left:518.74px;top:822.27px;font-size:12.5px;line-height:20px;color:#1c1c1c;font-weight:700;transform:scaleX(1.0562);transform-origin:0 0;-webkit-text-stroke:0.12px #ececec;">Next</span>
<div style="left:637px;top:61px;width:787px;height:3px;background:#b2b2b2;"></div>
<div style="left:1421px;top:61px;width:3px;height:222px;background:#b2b2b2;"></div>
<div style="left:1422px;top:283px;width:2px;height:571px;background:#b2b2b2;"></div>
<div style="left:637px;top:852px;width:787px;height:2px;background:#b2b2b2;"></div>
<div style="left:638px;top:64px;width:5px;height:788px;background:#fff;"></div>
<div style="left:637px;top:61px;width:1px;height:793px;background:#a6a6a6;"></div>
<div style="left:643px;top:64px;width:1px;height:219px;background:#a6a6a6;"></div>
<div style="left:643px;top:282px;width:778px;height:1px;background:#a6a6a6;"></div>
<div style="left:644px;top:84px;width:777px;height:1px;background:#b0b0b0;"></div>
<span class="t" style="left:654.81px;top:64.66px;font-size:12.8px;line-height:20px;color:#000;transform:scaleX(0.9395);transform-origin:0 0;">Machine Angle Correction Center</span>
<div style="left:648px;top:91px;width:34px;height:28px;background:#fff;border:1px solid #a9a9a9;"></div>
<div style="left:648px;top:123px;width:34px;height:28px;background:#fff;border:1px solid #a9a9a9;"></div>
<div style="left:648px;top:155px;width:34px;height:28px;background:#fff;border:1px solid #dedede;"></div>
<div style="left:648px;top:187px;width:34px;height:28px;background:#fff;border:1px solid #a9a9a9;"></div>
<div style="left:1195px;top:87px;width:100px;height:24px;background:#fff;border:1px solid #ababab;"></div>
<svg style="left:0;top:0" width="1440" height="300" viewBox="0 0 1440 300"><path d="M658.1 96.2 V111.9 H672.9" fill="none" stroke="#111" stroke-width="2.1"/><path d="M665 99 Q670.4 100 671.4 105.4" fill="none" stroke="#111" stroke-width="2"/><path d="M668.2 104.6 L674.2 104.2 L671.6 109 Z" fill="#111" stroke="#111" stroke-width="0.6" stroke-linejoin="round"/><path d="M658.1 128.2 V143.9 H672.9" fill="none" stroke="#111" stroke-width="2.1"/><circle cx="668.6" cy="135.9" r="5" fill="none" stroke="#111" stroke-width="1.6"/><path d="M666 135.9 L669.4 133.2 V134.8 H671.6 V137 H669.4 V138.6 Z" fill="#111"/><path d="M658.1 160.4 V175.9 H665.4" fill="none" stroke="#c8c8c8" stroke-width="2"/><path d="M662.2 164 H671.6 M669.2 161.4 L672.2 164 L669.2 166.6" fill="none" stroke="#c8c8c8" stroke-width="1.3"/><circle cx="670.1" cy="174.4" r="3.5" fill="none" stroke="#c8c8c8" stroke-width="1.7"/><g transform="translate(656.1 192.4) scale(1.0)" stroke-linecap="round"><path d="M0.4 17 L6.6 10.8" stroke="#111" stroke-width="1.7" fill="none"/><path d="M4 6.2 L10.6 12.8" stroke="#111" stroke-width="2.6" fill="none"/><path d="M7.4 9.6 L11.6 5.4" stroke="#111" stroke-width="5.2" fill="none" stroke-linecap="butt"/><path d="M10.2 1.2 L16.8 7.8" stroke="#111" stroke-width="2.8" fill="none"/><path d="M10.6 14 L13.2 16.6 L17.6 11.8" fill="none" stroke="#111" stroke-width="1.5" stroke-linecap="butt"/></g><rect x="925.5" y="91.4" width="13" height="13" rx="1.56" fill="#000"/><rect x="929.01" y="94.00" width="1.30" height="7.80" fill="#fff"/><path d="M931.22 97.90 L934.99 94.00 V101.80 Z" fill="#fff"/><rect x="959.4" y="91.4" width="13" height="13" rx="1.56" fill="#000"/><rect x="967.59" y="94.00" width="1.30" height="7.80" fill="#fff"/><path d="M966.68 97.90 L962.91 94.00 V101.80 Z" fill="#fff"/><g transform="translate(1008.1 91.8)"><path d="M0.9 8 Q0.4 1.6 6.4 1.3 Q10.4 1.2 12 4.6" fill="none" stroke="#111" stroke-width="1.7"/><path d="M14.3 2.8 L13.9 7.2 L9.9 5 Z" fill="#111" stroke="#111" stroke-width="0.5" stroke-linejoin="round"/><text x="-0.2" y="14" font-size="7.3" font-weight="700" font-family="'Liberation Sans',sans-serif" fill="#111">90</text></g><g transform="translate(1042.3 91.8)"><path d="M0.9 8 Q0.4 1.6 6.4 1.3 Q10.4 1.2 12 4.6" fill="none" stroke="#111" stroke-width="1.7"/><path d="M14.3 2.8 L13.9 7.2 L9.9 5 Z" fill="#111" stroke="#111" stroke-width="0.5" stroke-linejoin="round"/><text x="-0.2" y="14" font-size="7.3" font-weight="700" font-family="'Liberation Sans',sans-serif" fill="#111">180</text></g><g transform="translate(1076.1 91.8)"><path d="M0.9 8 Q0.4 1.6 6.4 1.3 Q10.4 1.2 12 4.6" fill="none" stroke="#111" stroke-width="1.7"/><path d="M14.3 2.8 L13.9 7.2 L9.9 5 Z" fill="#111" stroke="#111" stroke-width="0.5" stroke-linejoin="round"/><text x="-0.2" y="14" font-size="7.3" font-weight="700" font-family="'Liberation Sans',sans-serif" fill="#111">270</text></g><rect x="1102" y="92" width="1" height="14" fill="#b8b8b8"/><path d="M1118.2 94.8 Q1122.6 96.4 1123.2 100.4" fill="none" stroke="#111" stroke-width="1.6"/><path d="M1120.6 99.6 L1125.8 98.8 L1123.6 103.4 Z" fill="#111"/><circle cx="1156" cy="99" r="6" fill="none" stroke="#111" stroke-width="1.8"/><path d="M1152.6 99 L1156.6 96 V98 H1159.6 V100 H1156.6 V102 Z" fill="#111"/><g transform="translate(1203.0 91.8) scale(0.81)" stroke-linecap="round"><path d="M0.4 17 L6.6 10.8" stroke="#111" stroke-width="1.7" fill="none"/><path d="M4 6.2 L10.6 12.8" stroke="#111" stroke-width="2.6" fill="none"/><path d="M7.4 9.6 L11.6 5.4" stroke="#111" stroke-width="5.2" fill="none" stroke-linecap="butt"/><path d="M10.2 1.2 L16.8 7.8" stroke="#111" stroke-width="2.8" fill="none"/><path d="M10.6 14 L13.2 16.6 L17.6 11.8" fill="none" stroke="#111" stroke-width="1.5" stroke-linecap="butt"/></g><path d="M1404.73 98.14 L1404.73 99.86 L1403.29 99.90 L1402.90 100.83 L1403.89 101.88 L1402.68 103.09 L1401.63 102.10 L1400.70 102.49 L1400.66 103.93 L1398.94 103.93 L1398.90 102.49 L1397.97 102.10 L1396.92 103.09 L1395.71 101.88 L1396.70 100.83 L1396.31 99.90 L1394.87 99.86 L1394.87 98.14 L1396.31 98.10 L1396.70 97.17 L1395.71 96.12 L1396.92 94.91 L1397.97 95.90 L1398.90 95.51 L1398.94 94.07 L1400.66 94.07 L1400.70 95.51 L1401.63 95.90 L1402.68 94.91 L1403.89 96.12 L1402.90 97.17 L1403.29 98.10 Z" fill="#111"/><circle cx="1399.8" cy="99.0" r="1.80" fill="#fff"/><path d="M1410.12 95.71 L1410.12 97.09 L1409.24 97.11 L1408.84 97.81 L1409.25 98.59 L1408.07 99.27 L1407.60 98.52 L1406.80 98.52 L1406.33 99.27 L1405.15 98.59 L1405.56 97.81 L1405.16 97.11 L1404.28 97.09 L1404.28 95.71 L1405.16 95.69 L1405.56 94.99 L1405.15 94.21 L1406.33 93.53 L1406.80 94.28 L1407.60 94.28 L1408.07 93.53 L1409.25 94.21 L1408.84 94.99 L1409.24 95.69 Z" fill="#111"/><circle cx="1407.2" cy="96.4" r="1.08" fill="#fff"/><path d="M1410.21 103.25 L1410.21 104.75 L1409.24 104.78 L1408.80 105.55 L1409.26 106.41 L1407.95 107.16 L1407.45 106.33 L1406.55 106.33 L1406.05 107.16 L1404.74 106.41 L1405.20 105.55 L1404.76 104.78 L1403.79 104.75 L1403.79 103.25 L1404.76 103.22 L1405.20 102.45 L1404.74 101.59 L1406.05 100.84 L1406.55 101.67 L1407.45 101.67 L1407.95 100.84 L1409.26 101.59 L1408.80 102.45 L1409.24 103.22 Z" fill="#111"/><circle cx="1407.0" cy="104.0" r="1.19" fill="#fff"/><path d="M1378.6 179.6 A5.4 5.4 0 1 0 1378.8 186.2" fill="none" stroke="#111" stroke-width="1.9"/><path d="M1375.6 176.4 L1380.8 177 L1379.4 182 Z" fill="#111"/><path d="M1366.4 184.6 L1371.6 184.8 L1369.2 189.6 Z" fill="#111"/><circle cx="1374" cy="183" r="1.5" fill="#111"/></svg>
<div style="left:691px;top:90px;width:1px;height:187px;background:#b2b2b2;"></div>
<div style="left:990px;top:90px;width:1px;height:187px;background:#b2b2b2;"></div>
<span class="t" style="left:700.76px;top:89.34px;font-size:12.3px;line-height:20px;color:#000;transform:scaleX(1.0276);transform-origin:0 0;">Footprint</span>
<div style="left:701px;top:114px;width:280px;height:164px;background:#fff;border:1px solid #c2c2c2;"></div>
<div style="left:703px;top:235px;width:259px;height:20px;background:#bdd8ec;"></div>
<span class="t" style="left:705.71px;top:117.04px;font-size:12.3px;line-height:20px;color:#000;transform:scaleX(0.8839);transform-origin:0 0;">MLQP16_REV1_U14</span>
<span class="t" style="left:705.68px;top:137.14px;font-size:12.3px;line-height:20px;color:#000;transform:scaleX(0.9144);transform-origin:0 0;">MOLEX 51296-4594_J9</span>
<span class="t" style="left:705.70px;top:157.14px;font-size:12.3px;line-height:20px;color:#000;transform:scaleX(0.8965);transform-origin:0 0;">MSOP8_U5</span>
<span class="t" style="left:705.84px;top:177.14px;font-size:12.3px;line-height:20px;color:#000;transform:scaleX(0.9339);transform-origin:0 0;">QFN-32-0.5_U2</span>
<span class="t" style="left:705.86px;top:195.94px;font-size:12.3px;line-height:20px;color:#000;transform:scaleX(0.8992);transform-origin:0 0;">QSOP24_U11</span>
<span class="t" style="left:705.86px;top:215.84px;font-size:12.3px;line-height:20px;color:#000;transform:scaleX(0.8926);transform-origin:0 0;">QSOP24_U6</span>
<span class="t" style="left:705.86px;top:235.54px;font-size:12.3px;line-height:20px;color:#000;transform:scaleX(0.8926);transform-origin:0 0;">QSOP24_U8</span>
<span class="t" style="left:705.86px;top:255.44px;font-size:12.3px;line-height:20px;color:#000;transform:scaleX(0.8926);transform-origin:0 0;">QSOP24_U9</span>
<div style="left:964px;top:115px;width:16px;height:162px;background:#f0f0f0;"></div>
<div style="left:964px;top:133px;width:16px;height:8px;background:#c1c1c1;"></div>
<svg style="left:964px;top:115px;" width="16" height="17" viewBox="0 0 16 17"><path d="M4.6 10.8 L8.2 7.2 L11.8 10.8" fill="none" stroke="#606060" stroke-width="1.6"/></svg>
<svg style="left:964px;top:260px;" width="16" height="17" viewBox="0 0 16 17"><path d="M4.6 6.2 L8.2 9.8 L11.8 6.2" fill="none" stroke="#606060" stroke-width="1.6"/></svg>
<span class="t" style="left:1227.78px;top:89.54px;font-size:12.3px;line-height:20px;color:#000;transform:scaleX(1.0020);transform-origin:0 0;">Confirm</span>
<span class="t" style="left:999.66px;top:116.64px;font-size:12.3px;line-height:20px;color:#000;transform:scaleX(0.9345);transform-origin:0 0;">Reference Feature</span>
<span class="t" style="left:999.62px;top:144.74px;font-size:12.3px;line-height:20px;color:#000;transform:scaleX(0.9670);transform-origin:0 0;">CAD Angle</span>
<span class="t" style="left:999.60px;top:172.74px;font-size:12.3px;line-height:20px;color:#000;transform:scaleX(0.9931);transform-origin:0 0;">Machine Angle</span>
<span class="t" style="left:999.62px;top:201.14px;font-size:12.3px;line-height:20px;color:#000;transform:scaleX(0.9667);transform-origin:0 0;">Features Affected</span>
<span class="t" style="left:999.66px;top:226.54px;font-size:12.3px;line-height:20px;color:#000;transform:scaleX(0.9319);transform-origin:0 0;">Package Link</span>
<div style="left:1099px;top:115px;width:267px;height:22px;background:#fff;border:1px solid #ababab;"></div>
<div style="left:1349px;top:117px;width:15px;height:18px;background:#ececec;border:1px solid #adadad;"></div>
<svg style="left:1349px;top:117px;" width="15" height="18" viewBox="0 0 15 18"><path d="M4 7.4 L7.4 10.8 L10.8 7.4" fill="none" stroke="#555" stroke-width="1.3"/></svg>
<div style="left:1099px;top:143px;width:267px;height:22px;background:#fff;border:1px solid #ababab;"></div>
<div style="left:1099px;top:171px;width:256px;height:22px;background:#fff;border:1px solid #ababab;"></div>
<div style="left:1099px;top:199px;width:290px;height:22px;background:#fff;border:1px solid #ababab;"></div>
<div style="left:1372px;top:201px;width:15px;height:18px;background:#ececec;border:1px solid #adadad;"></div>
<svg style="left:1372px;top:201px;" width="15" height="18" viewBox="0 0 15 18"><path d="M4 7.4 L7.4 10.8 L10.8 7.4" fill="none" stroke="#555" stroke-width="1.3"/></svg>
<div style="left:1099px;top:225px;width:290px;height:22px;background:#fff;border:1px solid #ababab;"></div>
<span class="t" style="left:1103.89px;top:116.64px;font-size:12.3px;line-height:20px;color:#000;transform:scaleX(0.9596);transform-origin:0 0;">U8</span>
<span class="t" style="left:1104.27px;top:144.74px;font-size:12.3px;line-height:20px;color:#000;transform:scaleX(0.9193);transform-origin:0 0;">180.0</span>
<span class="t" style="left:1104.27px;top:172.74px;font-size:12.3px;line-height:20px;color:#000;transform:scaleX(0.9193);transform-origin:0 0;">180.0</span>
<span class="t" style="left:1103.89px;top:201.14px;font-size:12.3px;line-height:20px;color:#000;transform:scaleX(0.9596);transform-origin:0 0;">U8</span>
<span class="t" style="left:1370.16px;top:114.14px;font-size:12.3px;line-height:20px;color:#000;transform:scaleX(0.9754);transform-origin:0 0;">Top</span>
<span class="t" style="left:1370.03px;top:142.14px;font-size:12.3px;line-height:20px;color:#000;transform:scaleX(0.9237);transform-origin:0 0;">CW</span>
<div style="left:1000px;top:256px;width:389px;height:1px;background:#b0b0b0;"></div>
<div style="left:1000px;top:264px;width:10px;height:10px;background:#008000;"></div>
<span class="t" style="left:1014.79px;top:259.74px;font-size:12.3px;line-height:20px;color:#000;transform:scaleX(0.9873);transform-origin:0 0;">Confirmed</span>
<span class="t" style="left:1076.06px;top:259.74px;font-size:12.3px;line-height:20px;color:#000;transform:scaleX(0.9300);transform-origin:0 0;">1</span>
<div style="left:1105px;top:264px;width:10px;height:10px;background:#0000ff;"></div>
<span class="t" style="left:1119.86px;top:259.74px;font-size:12.3px;line-height:20px;color:#000;transform:scaleX(0.9948);transform-origin:0 0;">Unconfirmed</span>
<span class="t" style="left:1194.22px;top:259.74px;font-size:12.3px;line-height:20px;color:#000;transform:scaleX(0.9633);transform-origin:0 0;">144</span>
<div style="left:1230px;top:264px;width:10px;height:10px;background:#ff0000;"></div>
<span class="t" style="left:1244.64px;top:259.74px;font-size:12.3px;line-height:20px;color:#000;transform:scaleX(0.9510);transform-origin:0 0;">Errors</span>
<span class="t" style="left:1280.74px;top:259.74px;font-size:12.3px;line-height:20px;color:#000;transform:scaleX(0.9300);transform-origin:0 0;">0</span>
<div style="left:646px;top:312px;width:775px;height:1px;background:#c8c8c8;"></div>
<div style="left:646px;top:312px;width:1px;height:515px;background:#c8c8c8;"></div>
<svg style="left:647px;top:313px;overflow:hidden;font-family:'Liberation Sans',sans-serif" width="757" height="498" viewBox="647 313 757 498"><rect x="687.30" y="300.00" width="3.40" height="510.00" fill="#000"/><rect x="864.90" y="769.00" width="1.10" height="40.50" fill="#000"/><text transform="translate(720.76 330.30) scale(1.012 1.04)" font-size="27.0">TP31</text><text transform="translate(832.8 331.4) rotate(-90) scale(1 1.04)" font-size="26.5">C35</text><text transform="translate(988.18 354.60) scale(1.012 1.04)" font-size="24.2">C27</text><text transform="translate(1038.21 340.40) scale(1.012 1.04)" font-size="43.8">R24</text><text transform="translate(906.88 418.40) scale(1.012 1.04)" font-size="45.6">U13</text><text transform="translate(908.48 499.60) scale(1.012 1.04)" font-size="40.3">C34</text><text transform="translate(745.86 597.00) scale(1.012 1.04)" font-size="24.6">C51</text><text transform="translate(980.15 601.30) scale(1.012 1.04)" font-size="24.6">C52</text><text transform="translate(1103.51 536.80) scale(1.012 1.04)" font-size="45.2">U6</text><text transform="translate(1247.34 532.00) scale(1.012 1.04)" font-size="24.8">C16</text><text transform="translate(1246.42 661.50) scale(1.012 1.04)" font-size="25.0">C30</text><text transform="translate(1379.01 536.80) scale(1.012 1.04)" font-size="45.2">U8</text><rect x="721.40" y="339.80" width="64.50" height="129.50" fill="#0000ff" stroke="#000" stroke-width="3.0" stroke-linejoin="round"/><rect x="722.90" y="354.30" width="61.50" height="100.90" fill="#ff0000"/><rect x="841.80" y="281.50" width="78.40" height="49.00" fill="#0000ff" stroke="#000" stroke-width="3.0" stroke-linejoin="round"/><rect x="850.40" y="290.00" width="24.90" height="31.80" fill="#ff0000"/><rect x="886.90" y="290.00" width="24.50" height="31.80" fill="#000"/><rect x="989.20" y="281.50" width="46.60" height="47.00" fill="#0000ff" stroke="#000" stroke-width="3.0" stroke-linejoin="round"/><rect x="997.70" y="290.00" width="29.20" height="30.00" fill="#ff0000"/><rect x="809.60" y="335.90" width="95.90" height="133.80" fill="#0000ff" stroke="#000" stroke-width="3.0" stroke-linejoin="round"/><rect x="825.20" y="356.30" width="18.40" height="29.30" fill="#000"/><rect x="825.20" y="422.40" width="18.40" height="29.10" fill="#000"/><rect x="849.30" y="356.30" width="18.70" height="29.30" fill="#000"/><rect x="849.30" y="422.40" width="18.70" height="29.10" fill="#000"/><rect x="873.60" y="356.30" width="18.40" height="29.30" fill="#ff0000"/><rect x="873.60" y="422.40" width="18.40" height="29.10" fill="#000"/><rect x="829.60" y="463.00" width="78.30" height="45.30" fill="#0000ff" stroke="#000" stroke-width="3.0" stroke-linejoin="round"/><rect x="838.10" y="471.90" width="24.80" height="27.70" fill="#ff0000"/><rect x="874.60" y="471.90" width="24.80" height="27.70" fill="#000"/><path d="M809.6 440 V469.7 H905.5 V440" fill="none" stroke="#000" stroke-width="3" stroke-linejoin="round"/><rect x="747.80" y="606.10" width="44.90" height="78.20" fill="#0000ff" stroke="#000" stroke-width="3.0" stroke-linejoin="round"/><rect x="755.40" y="615.00" width="28.80" height="24.20" fill="#000"/><rect x="755.40" y="650.80" width="28.80" height="24.60" fill="#ff0000"/><rect x="978.90" y="609.50" width="49.60" height="78.40" fill="#0000ff" stroke="#000" stroke-width="3.0" stroke-linejoin="round"/><rect x="990.00" y="618.50" width="28.50" height="24.50" fill="#ff0000"/><rect x="990.00" y="655.00" width="28.50" height="24.60" fill="#000"/><rect x="802.80" y="551.90" width="176.10" height="199.10" fill="#0000ff" stroke="#000" stroke-width="3.0" stroke-linejoin="round"/><rect x="810.80" y="553.00" width="14.60" height="48.30" fill="#000"/><rect x="810.80" y="703.00" width="14.60" height="49.50" fill="#ff0000"/><rect x="827.40" y="553.00" width="14.60" height="48.30" fill="#000"/><rect x="827.40" y="703.00" width="14.60" height="49.50" fill="#000"/><rect x="844.00" y="553.00" width="14.60" height="48.30" fill="#000"/><rect x="844.00" y="703.00" width="14.60" height="49.50" fill="#000"/><rect x="860.60" y="553.00" width="14.60" height="48.30" fill="#000"/><rect x="860.60" y="703.00" width="14.60" height="49.50" fill="#000"/><rect x="877.20" y="553.00" width="14.60" height="48.30" fill="#000"/><rect x="877.20" y="703.00" width="14.60" height="49.50" fill="#000"/><rect x="893.80" y="553.00" width="14.60" height="48.30" fill="#000"/><rect x="893.80" y="703.00" width="14.60" height="49.50" fill="#000"/><rect x="910.40" y="553.00" width="14.60" height="48.30" fill="#000"/><rect x="910.40" y="703.00" width="14.60" height="49.50" fill="#000"/><rect x="927.00" y="553.00" width="14.60" height="48.30" fill="#000"/><rect x="927.00" y="703.00" width="14.60" height="49.50" fill="#000"/><rect x="943.60" y="553.00" width="14.60" height="48.30" fill="#000"/><rect x="943.60" y="703.00" width="14.60" height="49.50" fill="#000"/><rect x="960.20" y="553.00" width="14.60" height="48.30" fill="#000"/><rect x="960.20" y="703.00" width="14.60" height="49.50" fill="#000"/><rect x="802.8" y="551.9" width="176.1" height="199.1" fill="none" stroke="#000" stroke-width="3" stroke-linejoin="round"/><text transform="translate(847.65 667.20) scale(1.012 1.04)" font-size="44.6">U21</text><rect x="1028.60" y="550.50" width="210.10" height="193.40" fill="#008000" stroke="#000" stroke-width="3.0" stroke-linejoin="round"/><rect x="1039.60" y="558.30" width="10.40" height="48.40" fill="#000"/><rect x="1039.60" y="691.30" width="10.40" height="47.90" fill="#000"/><rect x="1055.76" y="558.30" width="10.40" height="48.40" fill="#000"/><rect x="1055.76" y="691.30" width="10.40" height="47.90" fill="#000"/><rect x="1071.93" y="558.30" width="10.40" height="48.40" fill="#000"/><rect x="1071.93" y="691.30" width="10.40" height="47.90" fill="#000"/><rect x="1088.09" y="558.30" width="10.40" height="48.40" fill="#000"/><rect x="1088.09" y="691.30" width="10.40" height="47.90" fill="#000"/><rect x="1104.26" y="558.30" width="10.40" height="48.40" fill="#000"/><rect x="1104.26" y="691.30" width="10.40" height="47.90" fill="#000"/><rect x="1120.42" y="558.30" width="10.40" height="48.40" fill="#000"/><rect x="1120.42" y="691.30" width="10.40" height="47.90" fill="#000"/><rect x="1136.59" y="558.30" width="10.40" height="48.40" fill="#000"/><rect x="1136.59" y="691.30" width="10.40" height="47.90" fill="#000"/><rect x="1152.75" y="558.30" width="10.40" height="48.40" fill="#000"/><rect x="1152.75" y="691.30" width="10.40" height="47.90" fill="#000"/><rect x="1168.92" y="558.30" width="10.40" height="48.40" fill="#000"/><rect x="1168.92" y="691.30" width="10.40" height="47.90" fill="#000"/><rect x="1185.08" y="558.30" width="10.40" height="48.40" fill="#000"/><rect x="1185.08" y="691.30" width="10.40" height="47.90" fill="#000"/><rect x="1201.25" y="558.30" width="10.40" height="48.40" fill="#000"/><rect x="1201.25" y="691.30" width="10.40" height="47.90" fill="#000"/><rect x="1217.41" y="558.30" width="10.40" height="48.40" fill="#ff0000"/><rect x="1217.41" y="691.30" width="10.40" height="47.90" fill="#000"/><rect x="1248.00" y="541.50" width="45.90" height="77.80" fill="#0000ff" stroke="#000" stroke-width="3.0" stroke-linejoin="round"/><rect x="1256.90" y="550.40" width="28.50" height="24.00" fill="#000"/><rect x="1256.90" y="586.30" width="28.50" height="24.50" fill="#ff0000"/><rect x="1247.80" y="670.90" width="45.90" height="77.60" fill="#0000ff" stroke="#000" stroke-width="3.0" stroke-linejoin="round"/><rect x="1256.70" y="679.40" width="28.50" height="24.40" fill="#ff0000"/><rect x="1256.70" y="715.80" width="28.50" height="24.40" fill="#000"/><rect x="1303.40" y="550.50" width="210.10" height="193.40" fill="#0000ff" stroke="#000" stroke-width="3.0" stroke-linejoin="round"/><rect x="1314.40" y="558.30" width="10.40" height="48.40" fill="#000"/><rect x="1314.40" y="691.30" width="10.40" height="47.90" fill="#000"/><rect x="1330.50" y="558.30" width="10.40" height="48.40" fill="#000"/><rect x="1330.50" y="691.30" width="10.40" height="47.90" fill="#000"/><rect x="1346.60" y="558.30" width="10.40" height="48.40" fill="#000"/><rect x="1346.60" y="691.30" width="10.40" height="47.90" fill="#000"/><rect x="1362.70" y="558.30" width="10.40" height="48.40" fill="#000"/><rect x="1362.70" y="691.30" width="10.40" height="47.90" fill="#000"/><rect x="1378.80" y="558.30" width="10.40" height="48.40" fill="#000"/><rect x="1378.80" y="691.30" width="10.40" height="47.90" fill="#000"/><rect x="1394.90" y="558.30" width="10.40" height="48.40" fill="#000"/><rect x="1394.90" y="691.30" width="10.40" height="47.90" fill="#000"/><rect x="1411.00" y="558.30" width="10.40" height="48.40" fill="#000"/><rect x="1411.00" y="691.30" width="10.40" height="47.90" fill="#000"/><rect x="1427.10" y="558.30" width="10.40" height="48.40" fill="#000"/><rect x="1427.10" y="691.30" width="10.40" height="47.90" fill="#000"/></svg>
<div style="left:1405px;top:313px;width:16px;height:498px;background:#f0f0f0;"></div>
<div style="left:1405px;top:431px;width:16px;height:161px;background:#c1c1c1;"></div>
<svg style="left:1405px;top:313px;" width="16" height="17" viewBox="0 0 16 17"><path d="M5 11.5 L8.5 8 L12 11.5" fill="none" stroke="#606060" stroke-width="1.6"/></svg>
<svg style="left:1405px;top:793px;" width="16" height="17" viewBox="0 0 16 17"><path d="M5 6.5 L8.5 10 L12 6.5" fill="none" stroke="#606060" stroke-width="1.6"/></svg>
<div style="left:647px;top:811px;width:774px;height:16px;background:#f0f0f0;"></div>
<div style="left:664px;top:811px;width:152px;height:16px;background:#c1c1c1;"></div>
<svg style="left:647px;top:811px;" width="17" height="16" viewBox="0 0 17 16"><path d="M11.5 4.5 L8 8 L11.5 11.5" fill="none" stroke="#606060" stroke-width="1.6"/></svg>
<svg style="left:1388px;top:811px;" width="17" height="16" viewBox="0 0 17 16"><path d="M5.5 4.5 L9 8 L5.5 11.5" fill="none" stroke="#606060" stroke-width="1.6"/></svg>
<div style="left:1385px;top:788px;width:20px;height:20px;background:#f0f0f0;border:1px solid #adadad;"></div>
<svg style="left:1385px;top:788px;" width="20" height="20" viewBox="0 0 20 20"><circle cx="9.8" cy="9.8" r="5.8" fill="#fff" stroke="#8a8a8a" stroke-width="0.9"/><circle cx="9.8" cy="9.8" r="4.4" fill="#35a535"/><path d="M8 8 L11.8 9.4 L10.4 10.1 L11.9 11.8 L11.2 12.3 L9.9 10.6 L9 11.8 Z" fill="#fff"/></svg>
<div style="left:647px;top:827px;width:774px;height:24px;background:#0072c6;"></div>
<span class="t" style="left:650.80px;top:829.80px;font-size:12.7px;line-height:20px;color:#fff;transform:scaleX(0.9006);transform-origin:0 0;">(0.4656 , 2.0654) Inches</span>
<div style="left:1314px;top:829px;width:56px;height:20px;background:#fff;"></div>
<span class="t" style="left:1317.37px;top:830.00px;font-size:12.7px;line-height:20px;color:#222;transform:scaleX(0.9312);transform-origin:0 0;">674%</span>
<div style="left:1354px;top:830px;width:15px;height:18px;background:#f0f0f0;border:1px solid #adadad;"></div>
<svg style="left:1354px;top:830px;" width="15" height="18" viewBox="0 0 15 18"><path d="M4.3 7 L7.5 3.6 L10.7 7 M4.3 11 L7.5 14.4 L10.7 11" fill="none" stroke="#555" stroke-width="1.2"/></svg>
<svg style="left:0;top:0" width="1440" height="869" viewBox="0 0 1440 869"><g transform="translate(1157.2 832.6)"><path d="M6.6 6 V3.4 Q6.6 0.6 9.6 0.6 Q12.6 0.6 12.6 3.4 V5.4" fill="none" stroke="#e6e6e6" stroke-width="1.5"/><rect x="0.4" y="6" width="9.2" height="7" fill="#e8b020" stroke="#6a5a3a" stroke-width="0.8"/><path d="M2 7 L4 12 M4.6 7 L6.6 12 M7.2 7 L8.8 11" stroke="#3a2a10" stroke-width="1.1"/></g><rect x="1179.4" y="831.6" width="15" height="15" fill="none" stroke="#4a3a2a" stroke-width="1" stroke-dasharray="2 1.4"/><g transform="translate(1181.2 833.4)"><path d="M6.4 6.4 L1.2 11" stroke="#c8962e" stroke-width="2.4" stroke-linecap="round"/><path d="M6 6.6 L1.4 10.8" stroke="#f0d48a" stroke-width="0.9" stroke-linecap="round"/><circle cx="8.2" cy="4.4" r="3.9" fill="#cfe6f6" stroke="#b8a88a" stroke-width="0.9"/><circle cx="7.6" cy="3.6" r="1.6" fill="#fff" opacity="0.8"/></g><g transform="translate(1205.6 835)"><path d="M6.4 6.4 L1.2 11" stroke="#c8962e" stroke-width="2.4" stroke-linecap="round"/><path d="M6 6.6 L1.4 10.8" stroke="#f0d48a" stroke-width="0.9" stroke-linecap="round"/><circle cx="8.2" cy="4.4" r="3.9" fill="#cfe6f6" stroke="#b8a88a" stroke-width="0.9"/><circle cx="7.6" cy="3.6" r="1.6" fill="#fff" opacity="0.8"/></g><text x="1202.6" y="837.6" font-size="7.4" font-weight="700" fill="#5a4a3a" font-family="'Liberation Sans',sans-serif">100</text><g transform="translate(1228.4 835)"><path d="M6.4 6.4 L1.2 11" stroke="#c8962e" stroke-width="2.4" stroke-linecap="round"/><path d="M6 6.6 L1.4 10.8" stroke="#f0d48a" stroke-width="0.9" stroke-linecap="round"/><circle cx="8.2" cy="4.4" r="3.9" fill="#cfe6f6" stroke="#b8a88a" stroke-width="0.9"/><circle cx="7.6" cy="3.6" r="1.6" fill="#fff" opacity="0.8"/></g><text x="1225.4" y="837.6" font-size="7.4" font-weight="700" fill="#5a4a3a" font-family="'Liberation Sans',sans-serif">ALL</text><rect x="1251" y="833" width="5.6" height="1.8" fill="#000"/><rect x="1258" y="833" width="5.6" height="1.8" fill="#000"/><g transform="translate(1248.6 835.2)"><path d="M6.2 6.4 L11.6 11" stroke="#c8962e" stroke-width="2.4" stroke-linecap="round"/><path d="M6.6 6.6 L11.4 10.8" stroke="#f0d48a" stroke-width="0.9" stroke-linecap="round"/><circle cx="4.4" cy="4.4" r="3.9" fill="#cfe6f6" stroke="#b8a88a" stroke-width="0.9"/><circle cx="3.6" cy="3.6" r="1.6" fill="#fff" opacity="0.8"/></g><rect x="1279.6" y="834.2" width="7.4" height="1.8" fill="#5a4a3a"/><g transform="translate(1271.4 835.2)"><path d="M6.2 6.4 L11.6 11" stroke="#c8962e" stroke-width="2.4" stroke-linecap="round"/><path d="M6.6 6.6 L11.4 10.8" stroke="#f0d48a" stroke-width="0.9" stroke-linecap="round"/><circle cx="4.4" cy="4.4" r="3.9" fill="#cfe6f6" stroke="#b8a88a" stroke-width="0.9"/><circle cx="3.6" cy="3.6" r="1.6" fill="#fff" opacity="0.8"/></g><path d="M1391.2 830.4 V838.4 M1387.2 834.4 H1395.2" stroke="#5a4a3a" stroke-width="1.8"/><g transform="translate(1378.2 835.4)"><path d="M6.2 6.4 L11.6 11" stroke="#c8962e" stroke-width="2.4" stroke-linecap="round"/><path d="M6.6 6.6 L11.4 10.8" stroke="#f0d48a" stroke-width="0.9" stroke-linecap="round"/><circle cx="4.4" cy="4.4" r="3.9" fill="#cfe6f6" stroke="#b8a88a" stroke-width="0.9"/><circle cx="3.6" cy="3.6" r="1.6" fill="#fff" opacity="0.8"/></g><path d="M1407 830.2 V837.8 M1403.2 834 H1410.8 M1414 830.2 V837.8 M1410.4 834 H1417.8" stroke="#000" stroke-width="1.9"/><g transform="translate(1401.2 835.4)"><path d="M6.2 6.4 L11.6 11" stroke="#c8962e" stroke-width="2.4" stroke-linecap="round"/><path d="M6.6 6.6 L11.4 10.8" stroke="#f0d48a" stroke-width="0.9" stroke-linecap="round"/><circle cx="4.4" cy="4.4" r="3.9" fill="#cfe6f6" stroke="#b8a88a" stroke-width="0.9"/><circle cx="3.6" cy="3.6" r="1.6" fill="#fff" opacity="0.8"/></g></svg>
</body></html>
